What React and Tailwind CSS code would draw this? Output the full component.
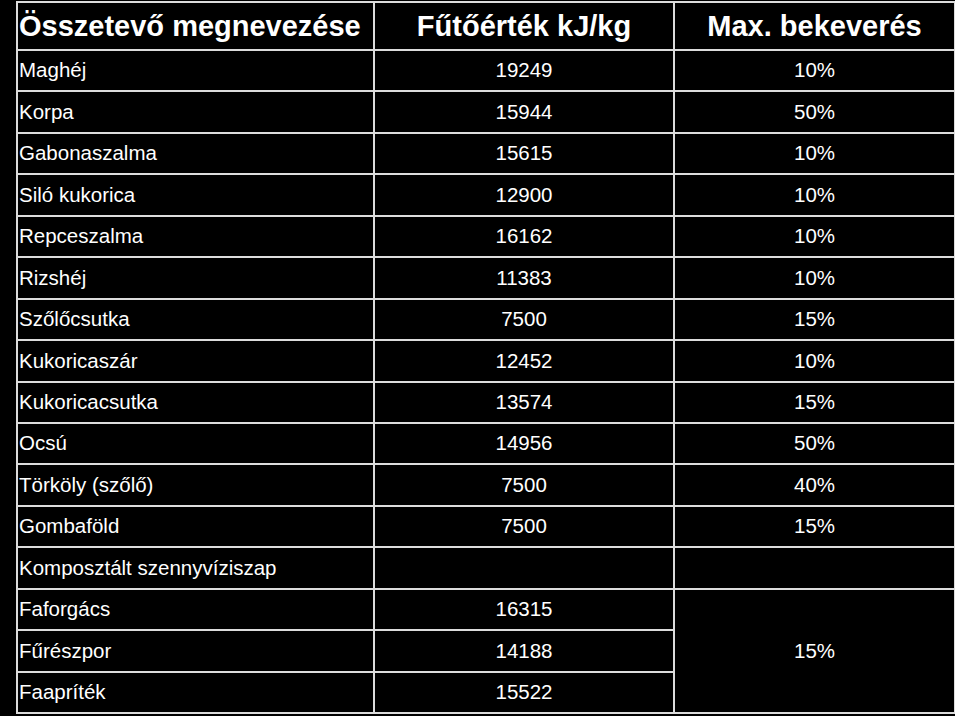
const rows = [
  ["Maghéj", "19249", "10%"],
  ["Korpa", "15944", "50%"],
  ["Gabonaszalma", "15615", "10%"],
  ["Siló kukorica", "12900", "10%"],
  ["Repceszalma", "16162", "10%"],
  ["Rizshéj", "11383", "10%"],
  ["Szőlőcsutka", "7500", "15%"],
  ["Kukoricaszár", "12452", "10%"],
  ["Kukoricacsutka", "13574", "15%"],
  ["Ocsú", "14956", "50%"],
  ["Törköly (szőlő)", "7500", "40%"],
  ["Gombaföld", "7500", "15%"],
  ["Komposztált szennyvíziszap", "", ""],
];

const wood = [
  ["Faforgács", "16315"],
  ["Fűrészpor", "14188"],
  ["Faapríték", "15522"],
];

const cell = "border-2 border-[#dcdcdc] p-0 leading-none";

const App = () => {
  return (
    <div className="w-[955px] h-[716px] bg-black pt-px pl-4 overflow-hidden font-['Liberation_Sans',Arial,sans-serif] text-white">
      <table className="border-collapse table-fixed w-[938px]">
        <colgroup>
          <col className="w-[357px]" />
          <col className="w-[300px]" />
          <col className="w-[281px]" />
        </colgroup>
        <thead>
          <tr className="h-[48px] text-[29px] font-bold">
            <th className={`${cell} text-left pl-px`}>Összetevő megnevezése</th>
            <th className={`${cell} text-center`}>Fűtőérték kJ/kg</th>
            <th className={`${cell} text-center`}>Max. bekeverés</th>
          </tr>
        </thead>
        <tbody className="text-[20.5px]">
          {rows.map(([name, value, max]) => (
            <tr key={name} className="h-[41.45px]">
              <td className={`${cell} text-left pl-px`}>{name}</td>
              <td className={`${cell} text-center`}>{value}</td>
              <td className={`${cell} text-center`}>{max}</td>
            </tr>
          ))}
          {wood.map(([name, value], i) => (
            <tr key={name} className="h-[41.45px]">
              <td className={`${cell} text-left pl-px`}>{name}</td>
              <td className={`${cell} text-center`}>{value}</td>
              {i === 0 && (
                <td rowSpan={3} className={`${cell} text-center`}>
                  15%
                </td>
              )}
            </tr>
          ))}
        </tbody>
      </table>
    </div>
  );
};

export default App;
